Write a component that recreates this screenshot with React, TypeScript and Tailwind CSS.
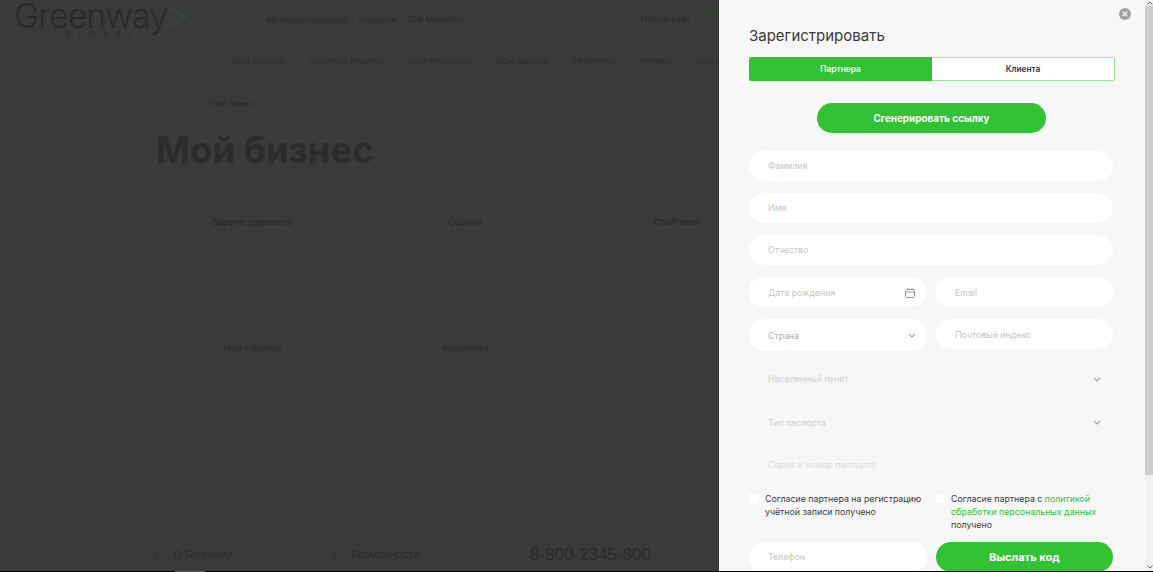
import React from "react";

const sans = "font-['Inter','Noto_Sans',sans-serif]";
const lib = "font-['Liberation_Sans','Noto_Sans',sans-serif]";

function Chevron({ className = "" }: { className?: string }) {
  return (
    <svg width="8" height="5" viewBox="0 0 8 5" fill="none" className={className}>
      <path d="M1 1l3 3 3-3" stroke="#a3a3a3" strokeWidth="1.1" />
    </svg>
  );
}

function Field({ label, className = "", children }: { label: string; className?: string; children?: React.ReactNode }) {
  return (
    <div className={`flex items-center justify-between rounded-full bg-white pl-[19px] pr-[11px] text-[8.8px] ${className}`}>
      <span>{label}</span>
      {children}
    </div>
  );
}

function Outlined({ label, chevron = true, className = "" }: { label: string; chevron?: boolean; className?: string }) {
  return (
    <div className={`flex items-center justify-between rounded-full border pl-[18px] pr-[11px] text-[8.8px] ${className}`}>
      <span>{label}</span>
      {chevron && <Chevron />}
    </div>
  );
}

function Leaf() {
  return (
    <svg width="11" height="13" viewBox="0 0 12 14" fill="none" className="mr-[10px]">
      <path d="M2 13L10 2M4 10C3 6 6 3 10 2c0 4-2 7-6 8z" stroke="#344235" strokeWidth="1" />
    </svg>
  );
}

function Tile({ label }: { label: string }) {
  return (
    <div className="flex w-[120px] flex-col items-center">
      <Leaf />
      <span className="mt-[5px] text-[9.5px] leading-[14px] text-[#282828]">{label}</span>
    </div>
  );
}

function Register() {
  return (
    <div className={`h-full flex-1 overflow-hidden px-[30px] ${sans}`}>
      <div className="flex justify-end pt-[8px]">
        <svg width="12" height="12" viewBox="0 0 12 12" className="mr-[-16px]">
          <circle cx="6" cy="6" r="6" fill="#9f9f9f" />
          <path d="M3.7 3.7l4.6 4.6M8.3 3.7l-4.6 4.6" stroke="#f7f7f7" strokeWidth="1.4" />
        </svg>
      </div>
      <h2 className="mt-[6px] text-[15px] leading-[20px] font-normal text-[#3a3a3a]">Зарегистрировать</h2>
      <div className="mt-[11px] flex h-[24px] w-[366px] overflow-hidden rounded-[2px] text-[8.3px] font-semibold">
        <div className="flex w-[183px] items-center justify-center bg-[#33c136] text-white">Партнера</div>
        <div className="flex flex-1 items-center justify-center rounded-r-[2px] border border-l-0 border-[#9be29c] bg-white text-[#333]">Клиента</div>
      </div>
      <div className="mt-[22px] ml-[68px] flex h-[30px] w-[229px] items-center justify-center rounded-full bg-[#33c136] text-[9.9px] font-bold text-white">
        Сгенерировать ссылку
      </div>
      <div className="mt-[18px] flex w-[364px] flex-col gap-[12px] text-[#c6c6c6]">
        <Field label="Фамилия" className="h-[30px]" />
        <Field label="Имя" className="h-[30px]" />
        <Field label="Отчество" className="h-[30px]" />
        <div className="flex items-start gap-[9px]">
          <Field label="Дата рождения" className="h-[30px] w-[178px] pt-[1px]">
            <svg width="10" height="10" viewBox="0 0 10 10" fill="none" className="mr-[1px]">
              <rect x="0.5" y="1.5" width="9" height="8" rx="1" stroke="#969696" />
              <path d="M0.5 4h9M3 0v2M7 0v2" stroke="#969696" />
            </svg>
          </Field>
          <Field label="Email" className="h-[30px] w-[177px] pt-[1px] pl-[18px]" />
        </div>
        <div className="flex items-start gap-[9px]">
          <Field label="Страна" className="h-[32px] w-[178px] pt-[1px] text-[#b0b0b0]">
            <Chevron />
          </Field>
          <Field label="Почтовый индекс" className="h-[30px] w-[177px] pt-[1px] pl-[18px]" />
        </div>
        <Outlined label="Населенный пункт" className="h-[32px] border-[#fdfdfd] text-[#d0d0d0]" />
        <Outlined label="Тип паспорта" className="mt-[-1px] h-[32px] border-[#fdfdfd] pt-[1px] text-[#d0d0d0]" />
        <Outlined label="Серия и номер паспорта" chevron={false} className="h-[30px] border-[#fbfbfb] text-[#dcdcdc]" />
      </div>
      <div className="mt-[12px] flex w-[364px] gap-[9px] text-[8.8px] leading-[13px] text-[#3a3a3a]">
        <div className="flex w-[178px] gap-[7px]">
          <span className="mt-[2px] h-[9px] w-[9px] shrink-0 bg-white" />
          <p>Согласие партнера на регистрацию учётной записи получено</p>
        </div>
        <div className="flex flex-1 gap-[6px]">
          <span className="mt-[2px] h-[9px] w-[9px] shrink-0 bg-white" />
          <p>
            Согласие партнера с <span className="text-[#33c136]">политикой обработки персональных данных</span> получено
          </p>
        </div>
      </div>
      <div className="mt-[11px] flex w-[364px] gap-[9px] text-[#c6c6c6]">
        <Field label="Телефон" className="h-[30px] w-[178px]" />
        <div className="flex h-[30px] w-[178px] items-center justify-center rounded-full bg-[#33c136] text-[11px] font-bold text-white">
          Выслать код
        </div>
      </div>
    </div>
  );
}

export default function App() {
  return (
    <div className="flex h-[572px] w-[1153px] flex-col overflow-hidden bg-black">
      <div className="flex h-[571px] overflow-hidden">
        <div className={`flex w-[719px] shrink-0 flex-col overflow-hidden bg-[#3a3a3a] text-[#2a2a2a] ${lib}`}>
          <div className="flex h-[40px] shrink-0">
            <div className={`ml-[14px] flex w-[189px] shrink-0 flex-col ${sans}`}>
              <div className="flex h-[31px] items-center">
                <span className="text-[34px] leading-[31px] font-light tracking-[-1px] text-[#2a2a2a]">Greenway</span>
                <svg width="18" height="20" viewBox="0 0 18 20" fill="none" className="ml-[2px] mt-[3px]">
                  <path d="M1 1l16 9-16 9z" stroke="#37474a" strokeWidth="1.5" />
                </svg>
              </div>
              <span className="ml-[51px] text-[7px] leading-[8px] tracking-[8px] text-[#2c2c2c]">GLOBAL</span>
            </div>
            <nav className="ml-[9px] flex h-[40px] shrink-0 items-center gap-[12px] text-[9.5px] whitespace-nowrap">
              <span className="text-[7.9px] text-[#343c32]">Мой бизнес</span>
              <span>Интернет-магазин</span>
              <span>Новости</span>
              <span className="text-[9.2px]">GW Маркеты</span>
            </nav>
            <div className="ml-[177px] flex h-[40px] shrink-0 items-center gap-[3px] text-[9.2px]">
              <span className="whitespace-nowrap">Новый сайт</span>
              <span className="flex h-[17px] w-[40px] items-center rounded-full border border-[#34402f] pl-[5px] text-[#34402f]">ON</span>
            </div>
          </div>
          <nav className="mt-[15px] ml-[231px] flex shrink-0 gap-[24.500px] text-[8px] leading-[14px] whitespace-nowrap">
            <span>МОЙ БИЗНЕС</span>
            <span>СИСТЕМА РАБОТЫ</span>
            <span>МОИ ФИНАНСЫ</span>
            <span>МОИ ЗАКАЗЫ</span>
            <span>РЕЙТИНГИ</span>
            <span>ПРОМО</span>
            <span>ОБУЧЕНИЕ</span>
          </nav>
          <div className="mt-[28px] ml-[155px] flex shrink-0 gap-[21px] text-[7.900px] leading-[14px]">
            <span className="w-[35px] text-[#363636]">Главная</span>
            <span>Мой бизнес</span>
          </div>
          <h1 className={`mt-[18px] ml-[156px] shrink-0 text-[36.5px] leading-[42px] font-bold text-[#2c2c2c] ${sans}`}>Мой бизнес</h1>
          <div className="mt-[26px] ml-[192px] grid w-[530px] shrink-0 grid-cols-[213px_212px_105px] gap-y-[94px]">
            <Tile label="Зарегистрировать" />
            <Tile label="Ссылки" />
            <Tile label="Стейтмент" />
            <Tile label="Мои клиенты" />
            <Tile label="Аналитика" />
          </div>
          <div className="mt-auto mb-[8px] ml-[155px] flex shrink-0 items-center text-[11px] leading-[17px]">
            <svg width="5" height="7" viewBox="0 0 5 7" className="mr-[14px]"><path d="M0 0l5 3.500-5 3.500z" fill="#353535" /></svg>
            <span className="w-[158px] text-[10.3px]">О Greenway</span>
            <svg width="5" height="7" viewBox="0 0 5 7" className="mr-[14px]"><path d="M0 0l5 3.500-5 3.500z" fill="#353535" /></svg>
            <span className="w-[160px]">Возможности</span>
            <svg width="10" height="14" viewBox="0 0 10 14" fill="none">
              <path d="M2 1c-2 2-1 6 1 9s4 3 5 3l1-2-2-2-1 1C5 9 4 7 3.500 5l1-1-1-3z" stroke="#34402f" />
            </svg>
            <span className="ml-[9px] text-[17px]">8-800-2345-800</span>
          </div>
        </div>
        <div className="flex flex-1 bg-[#f7f7f7]">
          <Register />
          <div className="flex w-[10px] shrink-0 flex-col items-center bg-[#f1f1f1]">
            <svg width="6" height="4" viewBox="0 0 6 4" className="mt-[1px] shrink-0"><path d="M0.500 3.500L3 1l2.500 2.500" fill="none" stroke="#666" /></svg>
            <div className="mt-[1px] h-[469px] w-full shrink-0 bg-[#cdcdcd]" />
            <svg width="6" height="4" viewBox="0 0 6 4" className="mt-auto mb-[2px] shrink-0"><path d="M0.500 0.500L3 3l2.500-2.500" fill="none" stroke="#666" /></svg>
          </div>
        </div>
      </div>
      <div className="flex h-px shrink-0">
        <div className="ml-[175px] w-[30px] bg-[#5a5a5a]" />
      </div>
    </div>
  );
}
